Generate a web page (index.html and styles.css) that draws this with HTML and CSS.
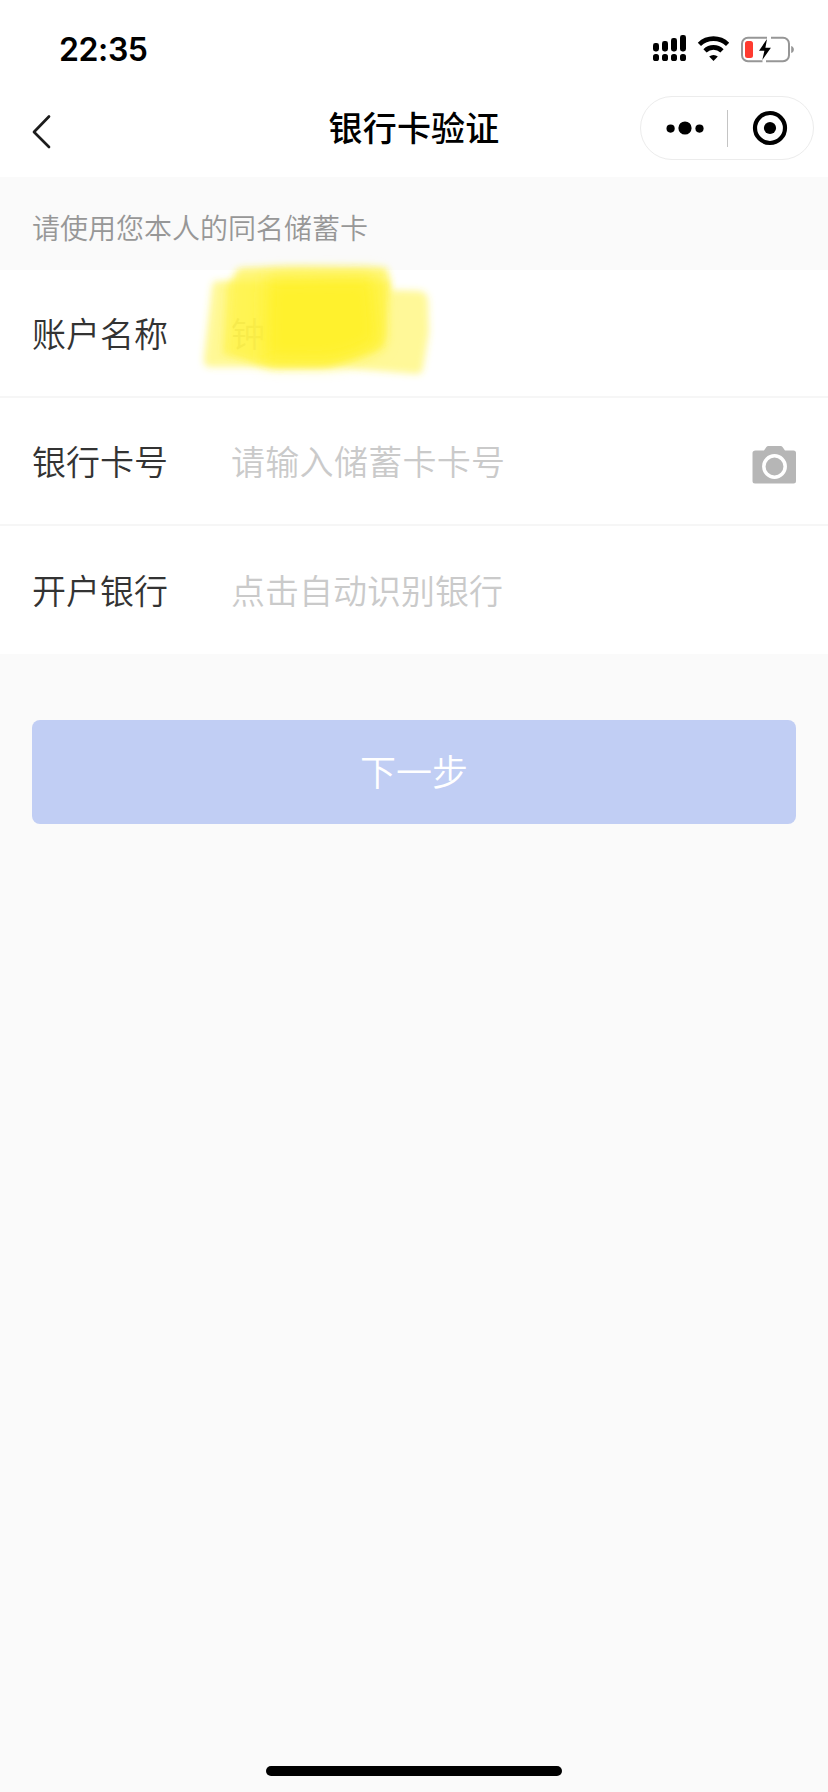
FILE: index.html
```html
<!DOCTYPE html>
<html lang="zh-CN">
<head>
<meta charset="utf-8">
<title>银行卡验证</title>
<link rel="stylesheet" href="styles.css">
</head>
<body>
<div class="screen">
  <header class="top">
    <div class="status">
      <span class="time">22:35</span>
      <svg class="status-icons" width="144" height="32" viewBox="0 0 144 32">
        <g fill="#000">
          <rect x="1" y="11" width="6" height="8.5" rx="2.4"/>
          <rect x="10" y="9" width="6" height="10.5" rx="2.4"/>
          <rect x="19" y="6" width="6" height="13.5" rx="2.4"/>
          <rect x="28" y="3" width="6" height="16.5" rx="2.4"/>
          <rect x="1" y="22" width="6" height="7" rx="2.6"/>
          <rect x="10" y="22" width="6" height="7" rx="2.6"/>
          <rect x="19" y="22" width="6" height="7" rx="2.6"/>
          <rect x="28" y="22" width="6" height="7" rx="2.6"/>
          <path d="M61.5 29l-4.3-4.4a6.3 6.3 0 0 1 8.6 0z"/>
        </g>
        <path d="M47.4 12.4a20.2 20.2 0 0 1 28.2 0M53 18.8a12.2 12.2 0 0 1 17 0" fill="none" stroke="#000" stroke-width="4.6"/>
        <path d="M115 5.8H96a6 6 0 0 0-6 6v11.4a6 6 0 0 0 6 6h14.500M119 5.8h12a6 6 0 0 1 6 6v11.4a6 6 0 0 1-6 6h-17" fill="none" stroke="#969696" stroke-width="2"/>
        <rect x="93" y="9" width="8" height="17" rx="2.5" fill="#ff3b30"/>
        <path d="M139.2 14c3.6 1 3.600 6 0 7z" fill="#969696"/>
        <path d="M115 7l-8 11.700h5.400L110.300 28l8.600-12.300h-5.500z" fill="#000"/>
      </svg>
    </div>
    <div class="nav">
      <svg class="back" width="22" height="38" viewBox="0 0 22 38"><path d="M18 3.5L3 19l15 15" fill="none" stroke="#1c1c1c" stroke-width="2.7" stroke-linecap="round" stroke-linejoin="round"/></svg>
      <h1 class="title">银行卡验证</h1>
      <div class="capsule">
        <svg width="38" height="16" viewBox="0 0 38 16"><circle cx="4.6" cy="8.6" r="4.1"/><circle cx="19" cy="8" r="6.6"/><circle cx="33.5" cy="8.6" r="4.1"/></svg>
        <span class="split"></span>
        <svg width="36" height="36" viewBox="0 0 36 36"><circle cx="18" cy="18" r="15" fill="none" stroke="#000" stroke-width="4.2"/><circle cx="18" cy="18" r="6.1"/></svg>
      </div>
    </div>
  </header>
  <p class="hint">请使用您本人的同名储蓄卡</p>
  <main class="form">
    <div class="row">
      <span class="label">账户名称</span>
      <span class="value">钟</span>
      <svg class="marker" width="270" height="140" viewBox="0 0 270 140">
        <defs>
          <filter id="soft" x="-15%" y="-15%" width="130%" height="130%"><feGaussianBlur stdDeviation="3.5"/></filter>
          <filter id="softer" x="-25%" y="-25%" width="150%" height="150%"><feGaussianBlur stdDeviation="9"/></filter>
        </defs>
        <path d="M37 31L210 31L203 98Q175 110 145 117L30 117Q23 117 24 108L32 37Q33 31 37 31Z" fill="#fff233" fill-opacity=".52" filter="url(#soft)"/>
        <path d="M60 18L120 17L204 18Q210 19 211 40L240 41Q247 42 248 50L249 82L243 118Q242 125 235 124L165 118L96 118L42 104L46 36Z" fill="#fff233" fill-opacity=".5" filter="url(#soft)"/>
        <path d="M56 20L110 17L206 18L207 90L195 101L150 115L90 118L50 103Z" fill="#fff233" fill-opacity=".3" filter="url(#soft)"/>
        <path d="M86 28L194 26L200 92Q170 110 145 112L84 111Z" fill="#fff129" fill-opacity=".9" filter="url(#softer)"/>
      </svg>
    </div>
    <div class="row">
      <span class="label">银行卡号</span>
      <span class="placeholder wide">请输入储蓄卡卡号</span>
      <svg class="camera" width="44" height="40" viewBox="0 0 44 40">
        <path d="M3.5 6.5H12l2.4-3.6Q15 2 16.500 2h12Q30 2 30.500 2.900L33 6.500h8.500Q44 6.500 44 9v28q0 2.500-2.500 2.500H3Q.5 39.500.5 37V9Q.5 6.500 3.500 6.500z" fill="#b6b6b6"/>
        <circle cx="22.500" cy="22.500" r="10.700" fill="none" stroke="#fff" stroke-width="3.500"/>
      </svg>
    </div>
    <div class="row">
      <span class="label">开户银行</span>
      <span class="placeholder">点击自动识别银行</span>
    </div>
  </main>
  <button class="next">下一步</button>
  <div class="home"></div>
</div>
</body>
</html>
```
FILE: styles.css
```css
* { box-sizing: border-box; }
body {
  margin: 0;
  background: #fafafa;
  font-family: "Noto Sans CJK SC", sans-serif;
}
.screen {
  display: flex;
  flex-direction: column;
  height: 1792px;
  background: #fafafa;
}
.top { height: 177px; background: #fff; }
.status {
  display: flex;
  justify-content: space-between;
  align-items: center;
  height: 88px;
  padding: 12px 32px 0 59px;
}
.time {
  font: 600 32px/40px Inter, sans-serif;
  letter-spacing: -0.4px;
}
.status-icons { margin-top: -4px; }
.nav {
  display: grid;
  grid-template-columns: 1fr auto 1fr;
  align-items: center;
  height: 80px;
  padding: 0 14px 0 31px;
}
.back { margin-top: 8px; }
.title {
  margin: -2px 0 0 -17px;
  font-size: 34px;
  line-height: 48px;
  font-weight: 500;
  letter-spacing: 0.2px;
  color: #000;
}
.capsule {
  justify-self: end;
  display: flex;
  align-items: center;
  justify-content: space-between;
  width: 174px;
  height: 64px;
  padding: 0 25px;
  border: 1px solid #ececec;
  border-radius: 32px;
}
.split { width: 1px; height: 37px; margin-left: -1px; background: #c4c4c4; }
.hint {
  margin: 0;
  height: 93px;
  padding: 29px 32px 0;
  font-size: 28px;
  line-height: 42px;
  font-weight: 350;
  color: #979797;
}
.form { background: #fff; }
.row {
  position: relative;
  display: flex;
  align-items: center;
  height: 128px;
  padding: 0 32px;
  border-bottom: 2px solid #f6f6f6;
  font-size: 34px;
  line-height: 50px;
}
.row:last-child { border-bottom: 0; }
.label { width: 199px; color: #333; font-weight: 350; }
.placeholder, .value { color: #cacaca; font-weight: 350; }
.wide { letter-spacing: 0.3px; }
.marker { position: absolute; left: 180px; top: -20px; }
.camera { margin: 6px 0 0 auto; }
.next {
  height: 104px;
  margin: 66px 32px 0;
  padding: 0 0 4px;
  border: 0;
  border-radius: 8px;
  background: #c1cef4;
  color: #fff;
  font-family: inherit;
  font-size: 36px;
  font-weight: 350;
}
.home {
  width: 296px;
  height: 10px;
  margin: auto auto 16px;
  border-radius: 5px;
  background: #000;
}
```
